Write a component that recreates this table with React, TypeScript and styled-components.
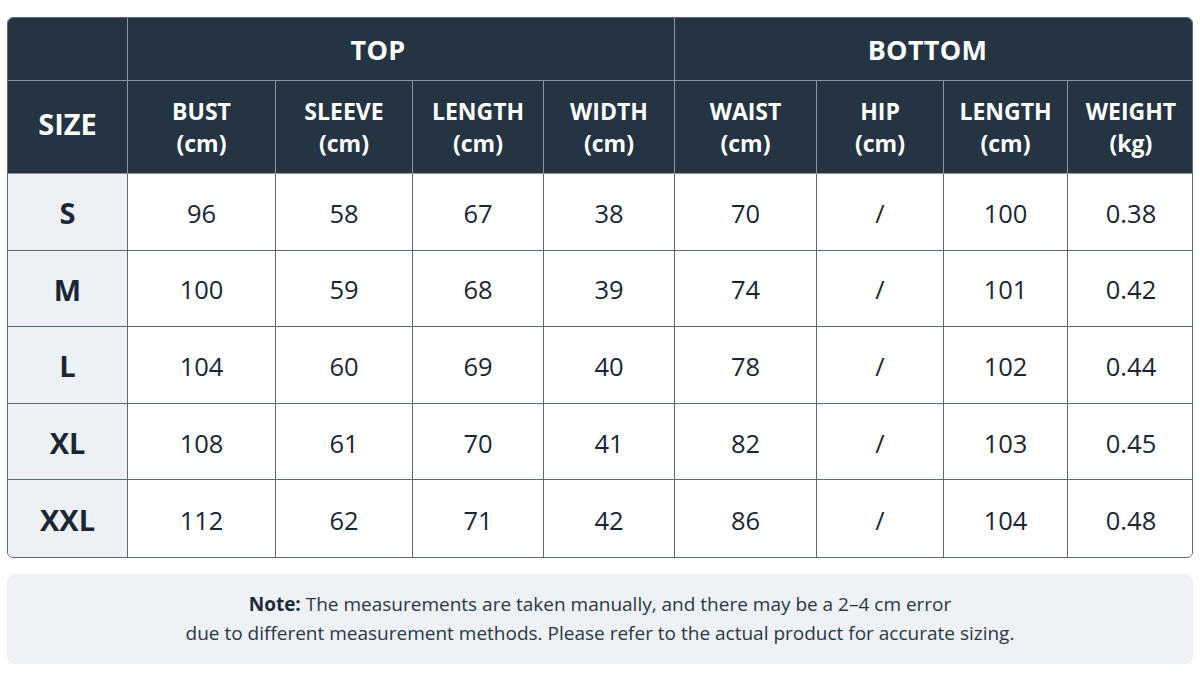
import * as React from "react";
import styled, { createGlobalStyle } from "styled-components";

const GlobalStyle = createGlobalStyle`
  html, body {
    margin: 0;
    padding: 0;
    background: #ffffff;
  }
  body {
    font-family: "Open Sans", "Noto Sans", Arial, sans-serif;
    color: #1c2836;
  }
`;

// column widths taken from the chart
const COLS = "120px 148px 137px 131px 131px 142px 127px 124px 126px";

const Page = styled.div`
  width: 1200px;
  height: 688px;
  box-sizing: border-box;
  padding: 17px 7px 0 7px;
  display: flex;
  flex-direction: column;
  gap: 16px;
`;

const Table = styled.div`
  display: grid;
  grid-template-columns: ${COLS};
  grid-template-rows: 63px 93px repeat(5, 76.6px);
  border: 1px solid #5d6874;
  border-radius: 6px;
  overflow: hidden;
`;

const HeadCell = styled.div<{ $span?: number; $last?: boolean; $shift?: number }>`
  grid-column: span ${(p) => p.$span || 1};
  background: #243442;
  color: #ffffff;
  font-weight: 700;
  display: flex;
  flex-direction: column;
  align-items: center;
  justify-content: center;
  text-align: center;
  padding-right: ${(p) => p.$shift || 0}px;
  border-right: ${(p) => (p.$last ? "none" : "1px solid #8b959f")};
  border-bottom: 1px solid #8b959f;
  box-sizing: border-box;
`;

const GroupTitle = styled.span`
  font-size: 27px;
  letter-spacing: 0.3px;
`;

const SizeTitle = styled.span`
  font-size: 29px;
  margin-bottom: 8px;
`;

const ColTitle = styled.span`
  font-size: 23px;
  line-height: 32px;
`;

const Cell = styled.div<{ $size?: boolean; $last?: boolean; $bottom?: boolean }>`
  display: flex;
  align-items: center;
  justify-content: center;
  background: ${(p) => (p.$size ? "#edf1f5" : "#ffffff")};
  font-size: ${(p) => (p.$size ? "29px" : "25.5px")};
  font-weight: ${(p) => (p.$size ? 700 : 500)};
  color: #1a2634;
  border-right: ${(p) => (p.$last ? "none" : "1px solid #5d6874")};
  border-bottom: ${(p) => (p.$bottom ? "none" : "1px solid #5d6874")};
  box-sizing: border-box;
  padding-top: 2px;
`;

const NoteBox = styled.div`
  height: 90px;
  background: #eef1f5;
  border-radius: 8px;
  display: flex;
  align-items: center;
  justify-content: center;
  text-align: center;
  font-size: 19px;
  line-height: 29px;
  color: #2b3745;
`;

const NoteLabel = styled.b`
  color: #1c2a3a;
  font-weight: 700;
`;

const columns = [
  ["BUST", "(cm)"],
  ["SLEEVE", "(cm)"],
  ["LENGTH", "(cm)"],
  ["WIDTH", "(cm)"],
  ["WAIST", "(cm)"],
  ["HIP", "(cm)"],
  ["LENGTH", "(cm)"],
  ["WEIGHT", "(kg)"],
];

const rows = [
  ["S", "96", "58", "67", "38", "70", "/", "100", "0.38"],
  ["M", "100", "59", "68", "39", "74", "/", "101", "0.42"],
  ["L", "104", "60", "69", "40", "78", "/", "102", "0.44"],
  ["XL", "108", "61", "70", "41", "82", "/", "103", "0.45"],
  ["XXL", "112", "62", "71", "42", "86", "/", "104", "0.48"],
];

export default function App() {
  return (
    <>
      <GlobalStyle />
      <Page>
        <Table>
          <HeadCell />
          <HeadCell $span={4} $shift={46}>
            <GroupTitle>TOP</GroupTitle>
          </HeadCell>
          <HeadCell $span={4} $shift={14} $last>
            <GroupTitle>BOTTOM</GroupTitle>
          </HeadCell>

          <HeadCell>
            <SizeTitle>SIZE</SizeTitle>
          </HeadCell>
          {columns.map((c, i) => (
            <HeadCell key={i} $last={i === columns.length - 1}>
              <ColTitle>{c[0]}</ColTitle>
              <ColTitle>{c[1]}</ColTitle>
            </HeadCell>
          ))}

          {rows.map((r, ri) =>
            r.map((v, ci) => (
              <Cell
                key={ri + "-" + ci}
                $size={ci === 0}
                $last={ci === r.length - 1}
                $bottom={ri === rows.length - 1}
              >
                {v}
              </Cell>
            ))
          )}
        </Table>
        <NoteBox>
          <div>
            <NoteLabel>Note:</NoteLabel> The measurements are taken manually, and there may be a 2–4 cm error
            <br />
            due to different measurement methods. Please refer to the actual product for accurate sizing.
          </div>
        </NoteBox>
      </Page>
    </>
  );
}
